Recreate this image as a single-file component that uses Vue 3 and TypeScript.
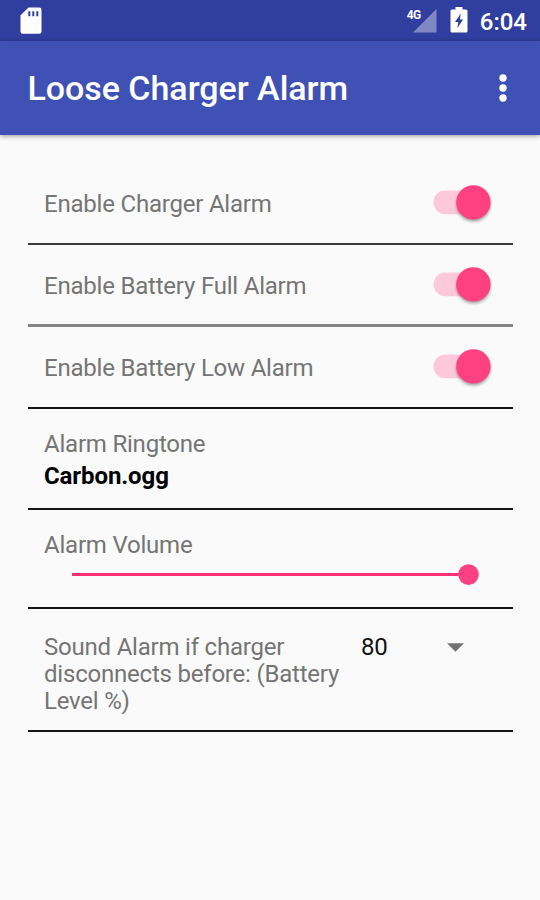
<script setup lang="ts">
import { ref } from 'vue'

interface ToggleSetting {
  label: string
  enabled: boolean
  tone: string
}

const toggles = ref<ToggleSetting[]>([
  { label: 'Enable Charger Alarm', enabled: true, tone: 'dark' },
  { label: 'Enable Battery Full Alarm', enabled: true, tone: 'grey' },
  { label: 'Enable Battery Low Alarm', enabled: true, tone: 'black' },
])
const ringtone = ref('Carbon.ogg')
const volume = ref(100)
const level = ref(80)
</script>

<template>
  <div class="screen">
    <header class="status">
      <svg class="sd" width="26" height="31" viewBox="0 0 26 31">
        <path d="M10.500 2.500H21.200Q23.500 2.500 23.500 4.800V26.500Q23.500 28.800 21.200 28.800H4.800Q2.500 28.800 2.500 26.500V10.300Z" fill="#fff" />
        <path d="M11.300 6.200v5M15.300 6.200v5M19.300 6.200v5" stroke="#303f9f" stroke-width="2" />
      </svg>
      <div class="tray">
        <span class="network">4G</span>
        <svg class="signal" width="24" height="24" viewBox="0 0 24 24"><path d="M23.500 0V23.500H0Z" fill="#7f88c3" /></svg>
        <svg class="battery" width="18" height="26" viewBox="0 0 18 26">
          <path d="M5.500 0h7v2.500H16q1.500 0 1.500 1.500v20q0 1.500-1.500 1.500H2Q.5 25.500.5 24V4Q.5 2.500 2 2.500h3.500Z" fill="#fff" />
          <path d="M10.800 6.500L5 15h3.300l-1 6.200L13 12.500H9.800Z" fill="#303f9f" />
        </svg>
        <span class="clock">6:04</span>
      </div>
    </header>
    <div class="appbar">
      <h1>Loose Charger Alarm</h1>
      <svg class="more" width="10" height="30" viewBox="0 0 10 30" fill="#fff">
        <circle cx="5" cy="5" r="3.700" /><circle cx="5" cy="15" r="3.700" /><circle cx="5" cy="25" r="3.700" />
      </svg>
    </div>
    <main>
      <section v-for="item in toggles" :key="item.label" class="row toggle" :class="item.tone">
        <span class="label">{{ item.label }}</span>
        <button class="switch" :class="{ on: item.enabled }" @click="item.enabled = !item.enabled">
          <svg width="62" height="44" viewBox="0 0 62 44">
            <rect class="track" x="3.500" y="9.400" width="48" height="23.800" rx="11.900" />
            <circle class="thumb" cx="43.400" cy="21.400" r="17.200" />
          </svg>
        </button>
      </section>
      <section class="row ringtone">
        <span class="label">Alarm Ringtone</span>
        <strong>{{ ringtone }}</strong>
      </section>
      <section class="row volume">
        <span class="label">Alarm Volume</span>
        <div class="slider">
          <div class="fill" :style="{ width: volume + '%' }"></div>
          <svg class="knob" width="22" height="22" viewBox="0 0 22 22"><circle cx="11.500" cy="10.600" r="10.300" fill="#ff4081" /></svg>
        </div>
      </section>
      <section class="row threshold">
        <span class="label">Sound Alarm if charger disconnects before: (Battery Level %)</span>
        <span class="value">{{ level }}</span>
        <svg class="arrow" width="17" height="9" viewBox="0 0 17 9"><path d="M0 .2H17L8.500 8.800Z" fill="#737373" /></svg>
      </section>
    </main>
  </div>
</template>

<style>
body { margin: 0; background: #fafafa; }
</style>

<style scoped>
.screen {
  width: 540px;
  height: 900px;
  overflow: hidden;
  background: #fafafa;
  font-family: Roboto, sans-serif;
  font-size: 24px;
  color: #757575;
}
.status {
  box-sizing: border-box;
  height: 41px;
  padding: 5px 13px 0 18px;
  display: flex;
  justify-content: space-between;
  align-items: flex-start;
  background: #303f9f;
  color: #fff;
}
.tray { display: flex; align-items: flex-start; }
.network { font-size: 12px; line-height: 14px; font-weight: 700; letter-spacing: -.5px; padding-top: 3px; }
.signal { margin: 4px 13px 0 -8px; }
.battery { margin: 2px 12px 0 0; }
.clock { font-size: 24px; line-height: 28px; font-weight: 500; padding-top: 3px; }
.appbar {
  box-sizing: border-box;
  height: 94px;
  padding: 0 32px 0 27.5px;
  display: flex;
  align-items: center;
  justify-content: space-between;
  background: #3f51b5;
  box-shadow: 0 1px 5px rgba(0, 0, 0, .4);
}
h1 { margin: 0; font-size: 34px; line-height: 40px; font-weight: 500; letter-spacing: -.04px; color: #fff; white-space: nowrap; }
main { padding: 28px 27px 0 28px; }
.row { box-sizing: border-box; border-bottom: 2px solid #151515; padding: 0 16px; }
.label { line-height: 27px; letter-spacing: -.21px; white-space: nowrap; }
.toggle { height: 82px; display: flex; align-items: center; justify-content: space-between; }
.toggle .label { padding-top: 2px; }
.toggle.dark { border-color: #3a3a3a; }
.toggle.grey { border-color: #858585; border-bottom-width: 3px; }
.toggle.grey .label { padding-top: 4px; }
.switch { border: 0; padding: 0; background: none; display: flex; margin-right: 5px; }
.track { fill: #bdbdbd; }
.thumb { fill: #fafafa; filter: drop-shadow(0 2px 1.5px rgba(0, 0, 0, .35)); }
.on .track { fill: #fdc9da; }
.on .thumb { fill: #ff4081; }
.ringtone { height: 101px; padding-top: 22px; display: flex; flex-direction: column; }
strong { font-weight: 700; color: #000; line-height: 28px; letter-spacing: -.1px; padding-top: 4px; }
.volume { height: 99px; padding-top: 22px; display: flex; flex-direction: column; }
.slider { height: 21px; margin: 5px 29px 0 28px; display: flex; align-items: center; }
.fill { height: 3px; background: #fa2f74; }
.knob { flex: none; margin: 0 -11px; }
.threshold { height: 123px; padding-top: 25px; display: flex; align-items: flex-start; }
.threshold .label { width: 317px; white-space: normal; }
.value { width: 86px; color: #111; line-height: 27px; letter-spacing: -.3px; }
.arrow { margin-top: 9px; }
</style>
